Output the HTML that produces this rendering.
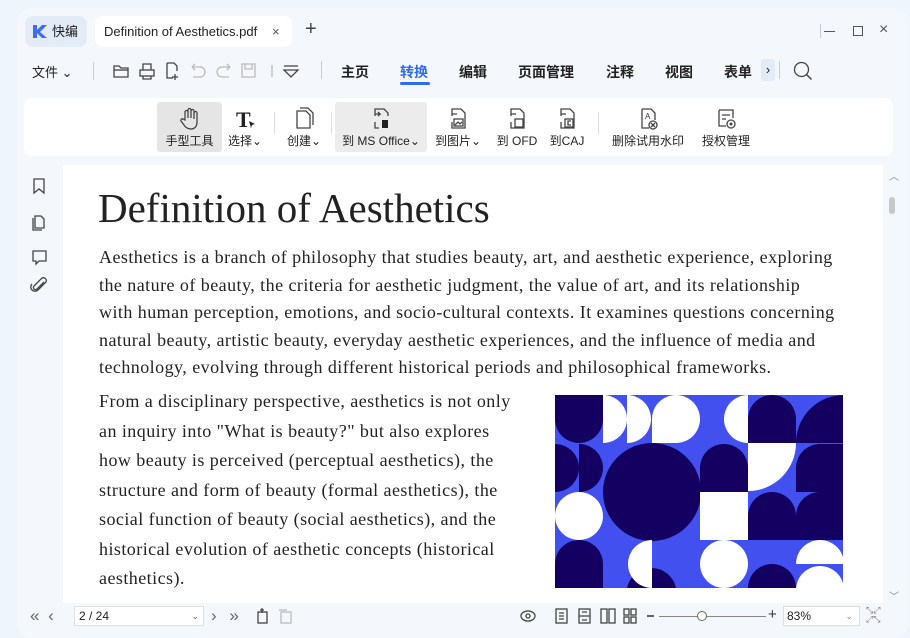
<!DOCTYPE html>
<html><head><meta charset="utf-8"><style>
*{margin:0;padding:0;box-sizing:border-box}
body{width:910px;height:628px;overflow:hidden;background:#eef5fc;font-family:"Liberation Sans","Noto Sans CJK SC",sans-serif;position:relative;color:#222}
.win{position:absolute;left:17px;top:8px;width:891px;height:630px;background:#f4f7fc;border-radius:14px}
.abs{position:absolute}
.tab{position:absolute;top:16px;height:31px;border-radius:8px;font-size:13px;line-height:31px}
.menu{position:absolute;top:62px;font-size:14px;font-weight:bold;color:#222;font-family:"Liberation Sans","Noto Sans CJK SC",sans-serif}
.tb{position:absolute;top:98px;left:24px;width:869px;height:58px;background:#fff;border-radius:8px}
.btn{position:absolute;top:102px;height:50px;font-size:12px;text-align:center;color:#222}
.btn .lb{position:absolute;bottom:3px;left:0;right:0;white-space:nowrap}
.btn svg{position:absolute;top:5px;left:50%;margin-left:-11px}
.page{position:absolute;left:63px;top:165px;width:820px;height:438px;background:#fff;overflow:hidden}
.serif{font-family:"Liberation Serif","DejaVu Serif",serif;color:#222}
p.l{font-size:18px;letter-spacing:0.45px;white-space:nowrap}
.ic{stroke:#444;fill:none;stroke-width:1.3}
</style></head><body>
<div class="win"></div>
<div class="tab" style="left:25px;width:62px;background:#e3ebf7"><svg class="abs" style="left:7px;top:8px" width="16" height="15"><path d="M1 1h4v5l5-5h5l-7 7 7 6h-5l-5-5v5H1z" fill="#3d6df2"/></svg><span class="abs" style="left:27px;font-size:13px">快编</span></div>
<div class="tab" style="left:95px;width:197px;background:#fff"><span class="abs" style="left:9px">Definition of Aesthetics.pdf</span><span class="abs" style="left:177px;color:#555">×</span></div>
<div class="abs" style="left:305px;top:18px;font-size:20px;color:#444">+</div>
<div class="abs" style="left:820px;top:24px;width:1px;height:14px;background:#ccc"></div>
<div class="abs" style="left:824px;top:31px;width:11px;height:1px;background:#555"></div>
<div class="abs" style="left:853px;top:26px;width:10px;height:10px;border:1px solid #555"></div>
<div class="abs" style="left:879px;top:21px;font-size:16px;color:#555">×</div>
<div class="abs" style="left:32px;top:62px;font-size:13px">文件 ⌄</div>
<div class="abs" style="left:93px;top:62px;width:1px;height:18px;background:#ccc"></div>
<svg class="abs" style="left:112px;top:61px" width="200" height="20">
<g class="ic"><path d="M2 5h5l2 2h7v9H2z"/><path d="M2 9h14"/>
<rect x="28" y="9" width="14" height="6"/><path d="M31 9V3h8v6M31 15v3h8v-3"/>
<path d="M55 2h7l3 3v5M55 2v15h6M63 13v6M60 16h6"/>
<g stroke="#bbb"><path d="M80 6h8a5 5 0 010 10h-7M80 6l3-3M80 6l3 3"/><path d="M118 6h-8a5 5 0 000 10h7M118 6l-3-3M118 6l-3 3"/>
<rect x="130" y="3" width="13" height="13"/><path d="M133 3v5h7V3"/><path d="M160 4v12"/></g>
<path d="M172 5h14M172 9l7 7 7-7z" /></g></svg>
<div class="abs" style="left:321px;top:61px;width:1px;height:18px;background:#ccc"></div>
<div class="menu" style="left:341px">主页</div>
<div class="menu" style="left:400px;color:#2f6bf0">转换</div>
<div class="abs" style="left:400px;top:82px;width:30px;height:3px;border-radius:2px;background:#2f6bf0"></div>
<div class="menu" style="left:459px">编辑</div>
<div class="menu" style="left:518px">页面管理</div>
<div class="menu" style="left:606px">注释</div>
<div class="menu" style="left:665px">视图</div>
<div class="menu" style="left:724px">表单</div>
<div class="abs" style="left:761px;top:59px;width:14px;height:22px;background:#e3ebf7;border-radius:3px;font-size:13px;text-align:center;line-height:22px">›</div>
<div class="abs" style="left:779px;top:61px;width:1px;height:18px;background:#ccc"></div>
<svg class="abs" style="left:793px;top:61px" width="20" height="20"><circle cx="8.5" cy="8.5" r="7" class="ic" stroke-width="1.5"/><path d="M13.5 13.5l5 5" stroke="#444" stroke-width="1.5"/></svg>
<div class="tb"></div>
<div class="btn" style="left:157px;width:65px;background:#e5e5e5;border-radius:3px"><svg width="22" height="24"><path d="M6 13V5a1.5 1.5 0 013 0v6V3a1.5 1.5 0 013 0v8V4a1.5 1.5 0 013 0v8V6a1.5 1.5 0 013 0v9c0 5-3 7-6 7s-5-1-7-4l-3-4a1.5 1.5 0 012-2z" class="ic"/></svg><div class="lb">手型工具</div></div>
<div class="btn" style="left:224px;width:42px"><svg width="22" height="24"><text x="2" y="20" font-family="Liberation Serif" font-size="22" font-weight="bold" fill="#222">T</text><path d="M15 14l6 3-3 1-1 3z" fill="#222"/></svg><div class="lb">选择⌄</div></div>
<div class="abs" style="left:274px;top:112px;width:1px;height:22px;background:#ddd"></div>
<div class="btn" style="left:282px;width:44px"><svg width="22" height="24"><path d="M4 4h9l4 4v13H4z M7 1h8l5 5v12" class="ic"/></svg><div class="lb">创建⌄</div></div>
<div class="abs" style="left:331px;top:112px;width:1px;height:22px;background:#ddd"></div>
<div class="btn" style="left:335px;width:92px;background:#ececec;border-radius:3px"><svg width="22" height="24"><path d="M5 9V2h9l4 4v3M5 15v6h4M5 7h5l-2-2M8 9l2-2" class="ic"/><rect x="12" y="13" width="6" height="8" fill="#222"/></svg><div class="lb">到 MS Office⌄</div></div>
<div class="btn" style="left:431px;width:54px"><svg width="22" height="24"><path d="M5 9V2h9l4 4v15H5v-6M5 7h5" class="ic"/><rect x="7" y="12" width="9" height="7" class="ic"/><path d="M8 18l3-3 2 2 2-2" class="ic"/></svg><div class="lb">到图片⌄</div></div>
<div class="btn" style="left:495px;width:44px"><svg width="22" height="24"><path d="M5 9V2h9l4 4v15H5v-6M5 7h5" class="ic"/><rect x="9" y="12" width="8" height="8" class="ic"/></svg><div class="lb">到 OFD</div></div>
<div class="btn" style="left:546px;width:42px"><svg width="22" height="24"><path d="M5 9V2h9l4 4v15H5v-6M5 7h5" class="ic"/><rect x="9" y="12" width="8" height="8" class="ic"/><path d="M15 14h-3v4h3" class="ic"/></svg><div class="lb">到CAJ</div></div>
<div class="abs" style="left:598px;top:112px;width:1px;height:22px;background:#ddd"></div>
<div class="btn" style="left:606px;width:84px"><svg width="22" height="24"><path d="M5 2h9l4 4v7M5 2v19h7" class="ic"/><text x="8" y="12" font-size="8" fill="#333">A</text><circle cx="16" cy="18" r="4" class="ic"/><path d="M14 16l4 4M18 16l-4 4" class="ic"/></svg><div class="lb">删除试用水印</div></div>
<div class="btn" style="left:697px;width:58px"><svg width="22" height="24"><path d="M4 3h14v8M4 3v16h7M7 8h8M7 12h4" class="ic"/><circle cx="16" cy="17" r="4" class="ic"/><circle cx="16" cy="17" r="1.5" fill="#444"/></svg><div class="lb">授权管理</div></div>
<svg class="abs" style="left:30px;top:176px" width="20" height="130"><g class="ic"><path d="M4 3h10v14l-5-4-5 4z"/><path d="M5 40h6l3 3v9H5z M3 42v12h9"/><path d="M3 75h13v10H9l-3 3v-3H3z"/><path d="M14 106l-7 7a2 2 0 01-3-3l8-8a3 3 0 014 4l-8 8a4 4 0 01-6-6"/></g></svg>
<div class="page serif">
<div class="abs" style="left:35px;top:19px;font-size:41px;white-space:nowrap">Definition of Aesthetics</div>
<div class="abs" style="left:36px;top:79px;line-height:27.5px">
<p class="l">Aesthetics is a branch of philosophy that studies beauty, art, and aesthetic experience, exploring</p>
<p class="l">the nature of beauty, the criteria for aesthetic judgment, the value of art, and its relationship</p>
<p class="l">with human perception, emotions, and socio-cultural contexts. It examines questions concerning</p>
<p class="l">natural beauty, artistic beauty, everyday aesthetic experiences, and the influence of media and</p>
<p class="l">technology, evolving through different historical periods and philosophical frameworks.</p>
</div>
<div class="abs" style="left:36px;top:222px;line-height:29.5px">
<p class="l">From a disciplinary perspective, aesthetics is not only</p>
<p class="l">an inquiry into "What is beauty?" but also explores</p>
<p class="l">how beauty is perceived (perceptual aesthetics), the</p>
<p class="l">structure and form of beauty (formal aesthetics), the</p>
<p class="l">social function of beauty (social aesthetics), and the</p>
<p class="l">historical evolution of aesthetic concepts (historical</p>
<p class="l">aesthetics).</p>
</div>
<svg class="abs" style="left:492px;top:230px" width="288" height="193" viewBox="0 0 288 193">
<defs><clipPath id="c"><rect width="288" height="193"/></clipPath></defs>
<g clip-path="url(#c)">
<rect width="288" height="193" fill="#4350f0"/>
<g fill="#140060">
<path d="M0 0h48v24a24 24 0 01-24 24A24 24 0 010 24z"/>
<path d="M193 48V24a24 24 0 0148 0v24z"/>
<path d="M241 48A48 48 0 01288 0v48z"/>
<path d="M0 49a24 24 0 010 48z"/><path d="M24 49a24 24 0 010 48z"/>
<circle cx="97" cy="97" r="49"/>
<path d="M145 97V73a24 24 0 0148 0v24z"/>
<path d="M241 97V73a24 24 0 0124-24h23v48z"/>
<path d="M193 145V121a24 24 0 0148 0v24z"/>
<path d="M241 145V121a24 24 0 0124-24h23v48z"/>
<path d="M0 193V169a24 24 0 0148 0v24z"/>
<path d="M72 193a25 25 0 0149 0z"/>
<path d="M193 193a24 24 0 0148 0z"/>
</g>
<g fill="#fff">
<path d="M48 0a24 24 0 010 48z"/><path d="M72 0a24 24 0 010 48z"/>
<path d="M97 48V24a24 24 0 0148 0v0a24 24 0 01-24 24z"/>
<path d="M193 0a24 24 0 000 48z"/>
<path d="M193 48h48a48 48 0 01-48 48z"/>
<circle cx="24" cy="121" r="24"/>
<rect x="145" y="97" width="48" height="48"/>
<path d="M97 145a24 24 0 000 48z"/>
<circle cx="169" cy="169" r="24"/>
<path d="M241 169a24 24 0 0148 0z"/>
<path d="M241 195a24 24 0 0148 0z"/>
</g></g></svg>
</div>
<div class="abs" style="left:889px;top:168px;font-size:10px;color:#888">︿</div>
<div class="abs" style="left:889px;top:197px;width:6px;height:17px;border-radius:3px;background:#c8c8c8"></div>
<div class="abs" style="left:889px;top:588px;font-size:10px;color:#888">﹀</div>
<div class="abs" style="left:30px;top:606px;font-size:17px;color:#666;letter-spacing:2px">« ‹</div>
<div class="abs" style="left:74px;top:606px;width:130px;height:20px;background:#fff;border:1px solid #e0e0e0;font-size:12px;line-height:18px;padding-left:4px">2 / 24<span style="position:absolute;right:4px;font-size:9px;color:#666">⌄</span></div>
<div class="abs" style="left:211px;top:606px;font-size:17px;color:#666;letter-spacing:4px">› »</div>
<svg class="abs" style="left:255px;top:607px" width="44" height="18"><g class="ic"><rect x="3" y="5" width="9" height="11"/><path d="M7 1v5M5 3h4"/><g stroke="#bbb"><rect x="26" y="5" width="10" height="11"/><path d="M24 3h8"/></g></g></svg>
<svg class="abs" style="left:520px;top:607px" width="150" height="18"><g class="ic"><ellipse cx="8" cy="9" rx="7" ry="5"/><circle cx="8" cy="9" r="2"/><rect x="36" y="2" width="11" height="14"/><path d="M39 6h5M39 9h5M39 12h5"/><rect x="59" y="2" width="11" height="14"/><path d="M59 9h11M62 5h5M62 13h5"/><rect x="81" y="2" width="6" height="14"/><rect x="89" y="2" width="6" height="14"/><rect x="104" y="2" width="5" height="6"/><rect x="111" y="2" width="5" height="6"/><rect x="104" y="10" width="5" height="6"/><rect x="111" y="10" width="5" height="6"/></g><path d="M127 9h7" stroke="#333" stroke-width="1.5"/></svg>
<div class="abs" style="left:659px;top:616px;width:107px;height:1px;background:#888"></div>
<div class="abs" style="left:697px;top:611px;width:10px;height:10px;border-radius:50%;background:#fff;border:1px solid #666"></div>
<div class="abs" style="left:768px;top:606px;font-size:15px;color:#333">+</div>
<div class="abs" style="left:783px;top:606px;width:77px;height:20px;background:#fff;border:1px solid #ddd;font-size:12px;line-height:18px;padding-left:3px">83%<span style="position:absolute;right:6px;font-size:9px;color:#888">⌄</span></div>
<div class="abs" style="left:866px;top:606px;font-size:9px;color:#777;line-height:9px">⤡⤢<br>⤢⤡</div>
</body></html>
